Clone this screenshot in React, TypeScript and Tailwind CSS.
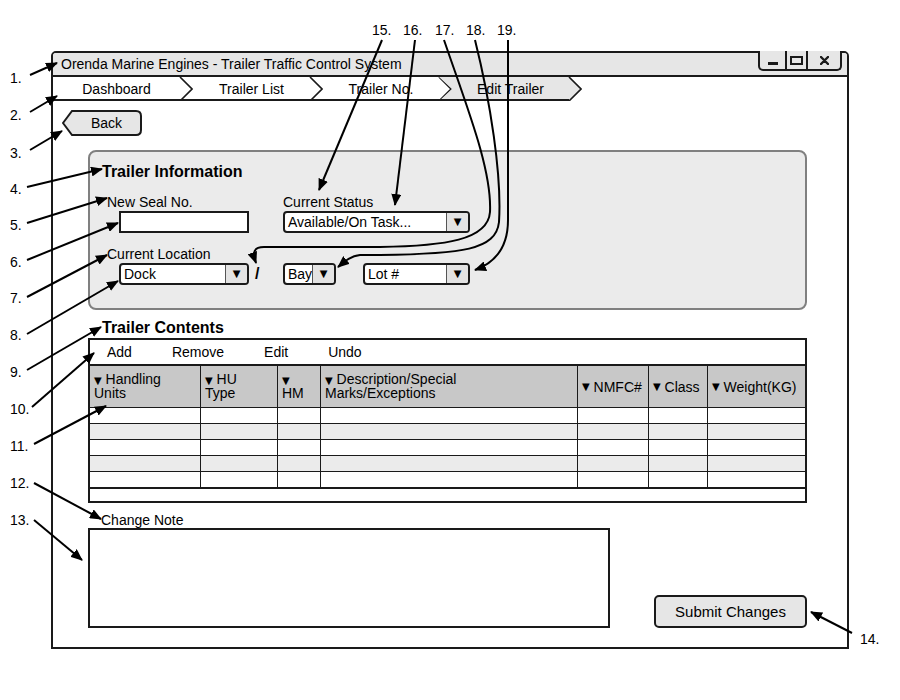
import React from "react";

function Crumb({ label, w, first, active }: { label: string; w: number; first?: boolean; active?: boolean }) {
  const b = w - 13;
  return (
    <div className={`relative h-[24px] shrink-0 ${first ? "" : "-ml-[13px]"}`} style={{ width: w }}>
      <svg className="absolute inset-0" width={w} height={24}>
        {active && <polygon points={`0,0 ${b},0 ${w},12 ${b},24 0,24 13,12`} fill="#e6e6e6" />}
        <path d={`M0,23 H${b}`} stroke="#1a1a1a" strokeWidth={2} fill="none" />
        <path d={`M${b},0 L${w - 1},12 L${b},24`} stroke="#1a1a1a" strokeWidth={1.6} fill="none" />
      </svg>
      <div
        className={`absolute top-0 bottom-0 flex items-center justify-center text-[14px] leading-none ${first ? "left-0" : "left-[13px]"}`}
        style={{ right: 13 }}
      >
        {label}
      </div>
    </div>
  );
}

function Tri() {
  return <span className="font-['DejaVu_Sans',sans-serif] text-[10px] leading-none">▼</span>;
}

function Select({ w, value }: { w: number; value: string }) {
  return (
    <div className="h-[22px] border-2 border-[#1a1a1a] rounded-[4px] bg-white flex overflow-hidden" style={{ width: w }}>
      <div className="flex-1 flex items-center pl-[3px] text-[14px] leading-none truncate">{value}</div>
      <div className="w-[22px] border-l border-[#555] bg-[#e3e3e3] flex items-center justify-center">
        <Tri />
      </div>
    </div>
  );
}

const cols = "grid grid-cols-[111px_77px_43px_257px_71px_59px_97px]";

function BodyRow({ alt, last }: { alt?: boolean; last?: boolean }) {
  return (
    <div className={`${cols} ${last ? "h-[17px] border-b-2" : "h-[16px] border-b"} border-[#1a1a1a] ${alt ? "bg-[#ebebeb]" : "bg-white"}`}>
      {[0, 1, 2, 3, 4, 5, 6].map((i) => (
        <div key={i} className={i < 6 ? "border-r border-[#1a1a1a]" : ""} />
      ))}
    </div>
  );
}

const nums: { t: string; x: number; y: number }[] = [
  { t: "1.", x: 10, y: 70 },
  { t: "2.", x: 10, y: 107 },
  { t: "3.", x: 10, y: 145 },
  { t: "4.", x: 10, y: 181 },
  { t: "5.", x: 10, y: 217 },
  { t: "6.", x: 10, y: 254 },
  { t: "7.", x: 10, y: 290 },
  { t: "8.", x: 10, y: 327 },
  { t: "9.", x: 10, y: 364 },
  { t: "10.", x: 10, y: 401 },
  { t: "11.", x: 10, y: 438 },
  { t: "12.", x: 10, y: 475 },
  { t: "13.", x: 10, y: 512 },
  { t: "14.", x: 860, y: 631 },
  { t: "15.", x: 372, y: 22 },
  { t: "16.", x: 403, y: 22 },
  { t: "17.", x: 435, y: 22 },
  { t: "18.", x: 466, y: 22 },
  { t: "19.", x: 497, y: 22 },
];

const lines: [number, number, number, number][] = [
  [30, 75, 57, 63],
  [30, 112, 57, 96],
  [30, 150, 62, 131],
  [27, 187, 102, 169],
  [27, 223, 107, 198],
  [27, 260, 118, 223],
  [27, 297, 107, 255],
  [27, 334, 118, 281],
  [27, 370, 101, 327],
  [32, 407, 94, 353],
  [34, 444, 106, 406],
  [34, 483, 101, 519],
  [34, 520, 82, 560],
  [852, 633, 811, 612],
  [382, 40, 319, 190],
  [415, 40, 395, 205],
];

export default function App() {
  return (
    <div className="relative w-[900px] h-[700px] bg-white text-black font-['Liberation_Sans',Arial,sans-serif] pt-[51px] pl-[51px]">
      <div className="w-[798px] h-[598px] border-2 border-[#1a1a1a] rounded-t-[5px] flex flex-col">
        {/* title bar */}
        <div className="h-[24px] bg-[#e6e6e6] border-b-2 border-[#1a1a1a] flex justify-between pl-[8px] pr-[5px] rounded-t-[3px]">
          <div className="self-center text-[14px] leading-none">Orenda Marine Engines - Trailer Traffic Control System</div>
          <div className="-mt-[2px] h-[20px] border-2 border-t-0 border-[#1a1a1a] rounded-b-[5px] flex bg-[#e6e6e6]">
            <div className="w-[25px] flex items-end justify-center pb-[4px]">
              <div className="w-[10px] h-[3px] bg-[#1a1a1a]" />
            </div>
            <div className="w-[21px] border-l-2 border-[#1a1a1a] flex items-center justify-center">
              <div className="w-[13px] h-[9px] border-2 border-[#1a1a1a]" />
            </div>
            <div className="w-[34px] border-l-2 border-[#1a1a1a] flex items-center justify-center">
              <svg width="9" height="9" viewBox="0 0 9 9">
                <path d="M1,1 L8,8 M8,1 L1,8" stroke="#1a1a1a" strokeWidth={2.4} strokeLinecap="round" />
              </svg>
            </div>
          </div>
        </div>
        {/* breadcrumb */}
        <div className="h-[24px] flex">
          <Crumb label="Dashboard" w={140} first />
          <Crumb label="Trailer List" w={143} />
          <Crumb label="Trailer No." w={142} />
          <Crumb label="Edit Trailer" w={143} active />
        </div>
        {/* body */}
        <div className="flex-1 flex flex-col">
          <div className="relative mt-[9px] ml-[9px] w-[80px] h-[26px]">
            <svg className="absolute inset-0" width="80" height="26">
              <path d="M10,1 H74 Q79,1 79,6 V20 Q79,25 74,25 H10 L1,13 Z" fill="#e6e6e6" stroke="#1a1a1a" strokeWidth={2} />
            </svg>
            <div className="absolute inset-0 flex items-center justify-center pl-[9px] text-[14px] leading-none">Back</div>
          </div>

          {/* Trailer Information */}
          <div className="mt-[14px] ml-[35px] w-[719px] h-[160px] bg-[#ebebeb] border-2 border-[#808080] rounded-[8px] flex flex-col">
            <div className="pt-[10px] pl-[12px] text-[16px] leading-[20px] font-bold">Trailer Information</div>
            <div className="mt-[12px] flex">
              <div className="ml-[17px] w-[176px] flex flex-col">
                <div className="text-[14px] leading-[16px]">New Seal No.</div>
                <div className="mt-[1px] ml-[12px] w-[130px] h-[22px] border-2 border-[#1a1a1a] bg-white" />
              </div>
              <div className="flex flex-col">
                <div className="text-[14px] leading-[16px]">Current Status</div>
                <div className="mt-[1px]">
                  <Select w={187} value="Available/On Task..." />
                </div>
              </div>
            </div>
            <div className="mt-[13px] ml-[17px] text-[14px] leading-[16px]">Current Location</div>
            <div className="mt-[1px] ml-[29px] flex items-center">
              <Select w={130} value="Dock" />
              <div className="w-[34px] pl-[6px] text-[16px] font-bold leading-none">/</div>
              <Select w={53} value="Bay" />
              <div className="ml-[27px]">
                <Select w={107} value="Lot #" />
              </div>
            </div>
          </div>

          {/* Trailer Contents */}
          <div className="mt-[8px] ml-[49px] text-[16px] leading-[20px] font-bold">Trailer Contents</div>
          <div className="ml-[35px] w-[719px] h-[165px] border-2 border-[#1a1a1a] flex flex-col">
            <div className="h-[26px] border-b-2 border-[#1a1a1a] flex items-center pl-[17px] gap-[40px] text-[14px] leading-none">
              <span>Add</span>
              <span>Remove</span>
              <span>Edit</span>
              <span>Undo</span>
            </div>
            <div className={`${cols} h-[42px] bg-[#c8c8c8] border-b border-[#1a1a1a] text-[14px] leading-[14px]`}>
              <div className="border-r border-[#1a1a1a] pt-[6px] pl-[4px]">
                <Tri /> Handling
                <br />
                Units
              </div>
              <div className="border-r border-[#1a1a1a] pt-[6px] pl-[4px]">
                <Tri /> HU
                <br />
                Type
              </div>
              <div className="border-r border-[#1a1a1a] pt-[6px] pl-[4px]">
                <Tri />
                <br />
                HM
              </div>
              <div className="border-r border-[#1a1a1a] pt-[6px] pl-[4px]">
                <Tri /> Description/Special
                <br />
                Marks/Exceptions
              </div>
              <div className="border-r border-[#1a1a1a] flex items-center pl-[4px] whitespace-nowrap">
                <Tri />
                &nbsp;NMFC#
              </div>
              <div className="border-r border-[#1a1a1a] flex items-center pl-[4px] whitespace-nowrap">
                <Tri />
                &nbsp;Class
              </div>
              <div className="flex items-center pl-[4px] whitespace-nowrap">
                <Tri />
                &nbsp;Weight(KG)
              </div>
            </div>
            <BodyRow />
            <BodyRow alt />
            <BodyRow />
            <BodyRow alt />
            <BodyRow last />
            <div className="flex-1" />
          </div>

          {/* Change note */}
          <div className="mt-[9px] ml-[48px] text-[14px] leading-[16px]">Change Note</div>
          <div className="mt-[0px] ml-[35px] w-[719px] flex items-end justify-between">
            <div className="w-[522px] h-[100px] border-2 border-[#1a1a1a] bg-white" />
            <div className="w-[153px] h-[33px] border-2 border-[#1a1a1a] rounded-[5px] bg-[#e6e6e6] flex items-center justify-center text-[15px] leading-none">
              Submit Changes
            </div>
          </div>
        </div>
      </div>

      {/* annotation layer */}
      <svg className="absolute inset-0 pointer-events-none" width="900" height="700">
        <defs>
          <marker id="ah" markerWidth="12" markerHeight="10" refX="11" refY="5" orient="auto" markerUnits="userSpaceOnUse">
            <path d="M0,0 L12,5 L0,10 z" fill="#000" />
          </marker>
        </defs>
        {lines.map(([x1, y1, x2, y2], i) => (
          <line key={i} x1={x1} y1={y1} x2={x2} y2={y2} stroke="#000" strokeWidth={2} markerEnd="url(#ah)" />
        ))}
        <path
          d="M444,40 C468,110 492,170 490,212 C488,240 445,246 380,247 L264,247 C254,247 252,252 256,263"
          stroke="#000"
          strokeWidth={2}
          fill="none"
          markerEnd="url(#ah)"
        />
        <path
          d="M475,40 C490,100 502,175 499,222 C496,250 462,254 380,255 L360,255 C350,256 344,262 338,267"
          stroke="#000"
          strokeWidth={2}
          fill="none"
          markerEnd="url(#ah)"
        />
        <path d="M508,40 L508,220 C508,245 497,262 475,270" stroke="#000" strokeWidth={2} fill="none" markerEnd="url(#ah)" />
      </svg>
      {nums.map((n) => (
        <span key={n.t} className="absolute text-[14px] leading-[16px]" style={{ left: n.x, top: n.y }}>
          {n.t}
        </span>
      ))}
    </div>
  );
}
